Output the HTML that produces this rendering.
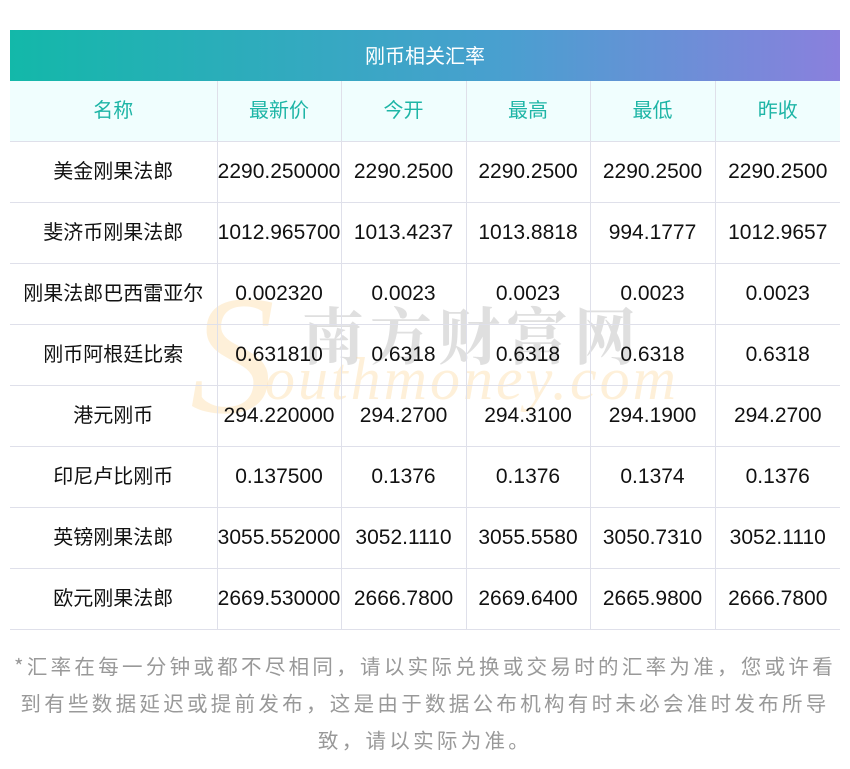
<!DOCTYPE html>
<html><head><meta charset="utf-8"><style>
body{margin:0;width:850px;height:769px;background:#fff;font-family:"Noto Sans CJK SC","Liberation Sans",sans-serif;position:relative;overflow:hidden}
.title{position:absolute;left:10px;top:30px;width:830px;height:51px;background:linear-gradient(90deg,#13b8a9,#4a9fd0 60%,#8a80dd);color:#fff;font-size:20px;line-height:49px;text-align:center}
table{position:absolute;left:10px;top:81px;width:830px;border-collapse:collapse;table-layout:fixed}
td{height:60px;border:1px solid #dfe0ea;text-align:center;font-size:20px;color:#111;padding:0;white-space:nowrap;line-height:24px}
td span{position:relative;top:-2px}
td.n{font-family:"Liberation Sans",sans-serif;font-size:21px}
tr:first-child td{border-top:none;}
td:first-child{border-left:none}td:last-child{border-right:none}
tr.h td{background:#f0fefe;color:#1eb5a6}
.note{position:absolute;left:6px;top:647px;width:838px;text-align:center;color:#999;font-size:20.5px;line-height:37px;letter-spacing:3.3px}
.wm1{position:absolute;left:302px;top:288px;font-size:62px;color:rgba(150,150,150,.3);letter-spacing:6px;font-family:"Noto Serif CJK SC",serif;font-weight:bold}
.wm2{position:absolute;left:265px;top:345px;font-size:60px;font-style:italic;color:rgba(250,200,120,.28);font-family:"Liberation Serif",serif;letter-spacing:3px}
.wm3{position:absolute;left:190px;top:270px;font-size:170px;line-height:170px;font-style:italic;color:rgba(250,200,120,.28);font-family:"Liberation Serif",serif}
</style></head><body>
<div class="title">刚币相关汇率</div>
<div class="wm3">S</div><div class="wm1">南方财富网</div><div class="wm2">outhmoney.com</div>
<table>
<colgroup><col style="width:207px"><col style="width:124px"><col style="width:125px"><col style="width:124px"><col style="width:125px"><col style="width:125px"></colgroup>
<tr class="h"><td><span>名称</span></td><td><span>最新价</span></td><td><span>今开</span></td><td><span>最高</span></td><td><span>最低</span></td><td><span>昨收</span></td></tr>
<tr><td><span>美金刚果法郎</span></td><td class="n">2290.250000</td><td class="n">2290.2500</td><td class="n">2290.2500</td><td class="n">2290.2500</td><td class="n">2290.2500</td></tr>
<tr><td><span>斐济币刚果法郎</span></td><td class="n">1012.965700</td><td class="n">1013.4237</td><td class="n">1013.8818</td><td class="n">994.1777</td><td class="n">1012.9657</td></tr>
<tr><td><span>刚果法郎巴西雷亚尔</span></td><td class="n">0.002320</td><td class="n">0.0023</td><td class="n">0.0023</td><td class="n">0.0023</td><td class="n">0.0023</td></tr>
<tr><td><span>刚币阿根廷比索</span></td><td class="n">0.631810</td><td class="n">0.6318</td><td class="n">0.6318</td><td class="n">0.6318</td><td class="n">0.6318</td></tr>
<tr><td><span>港元刚币</span></td><td class="n">294.220000</td><td class="n">294.2700</td><td class="n">294.3100</td><td class="n">294.1900</td><td class="n">294.2700</td></tr>
<tr><td><span>印尼卢比刚币</span></td><td class="n">0.137500</td><td class="n">0.1376</td><td class="n">0.1376</td><td class="n">0.1374</td><td class="n">0.1376</td></tr>
<tr><td><span>英镑刚果法郎</span></td><td class="n">3055.552000</td><td class="n">3052.1110</td><td class="n">3055.5580</td><td class="n">3050.7310</td><td class="n">3052.1110</td></tr>
<tr><td><span>欧元刚果法郎</span></td><td class="n">2669.530000</td><td class="n">2666.7800</td><td class="n">2669.6400</td><td class="n">2665.9800</td><td class="n">2666.7800</td></tr>
</table>
<div class="note">*汇率在每一分钟或都不尽相同，请以实际兑换或交易时的汇率为准，您或许看<br>到有些数据延迟或提前发布，这是由于数据公布机构有时未必会准时发布所导<br>致，请以实际为准。</div>
</body></html>
